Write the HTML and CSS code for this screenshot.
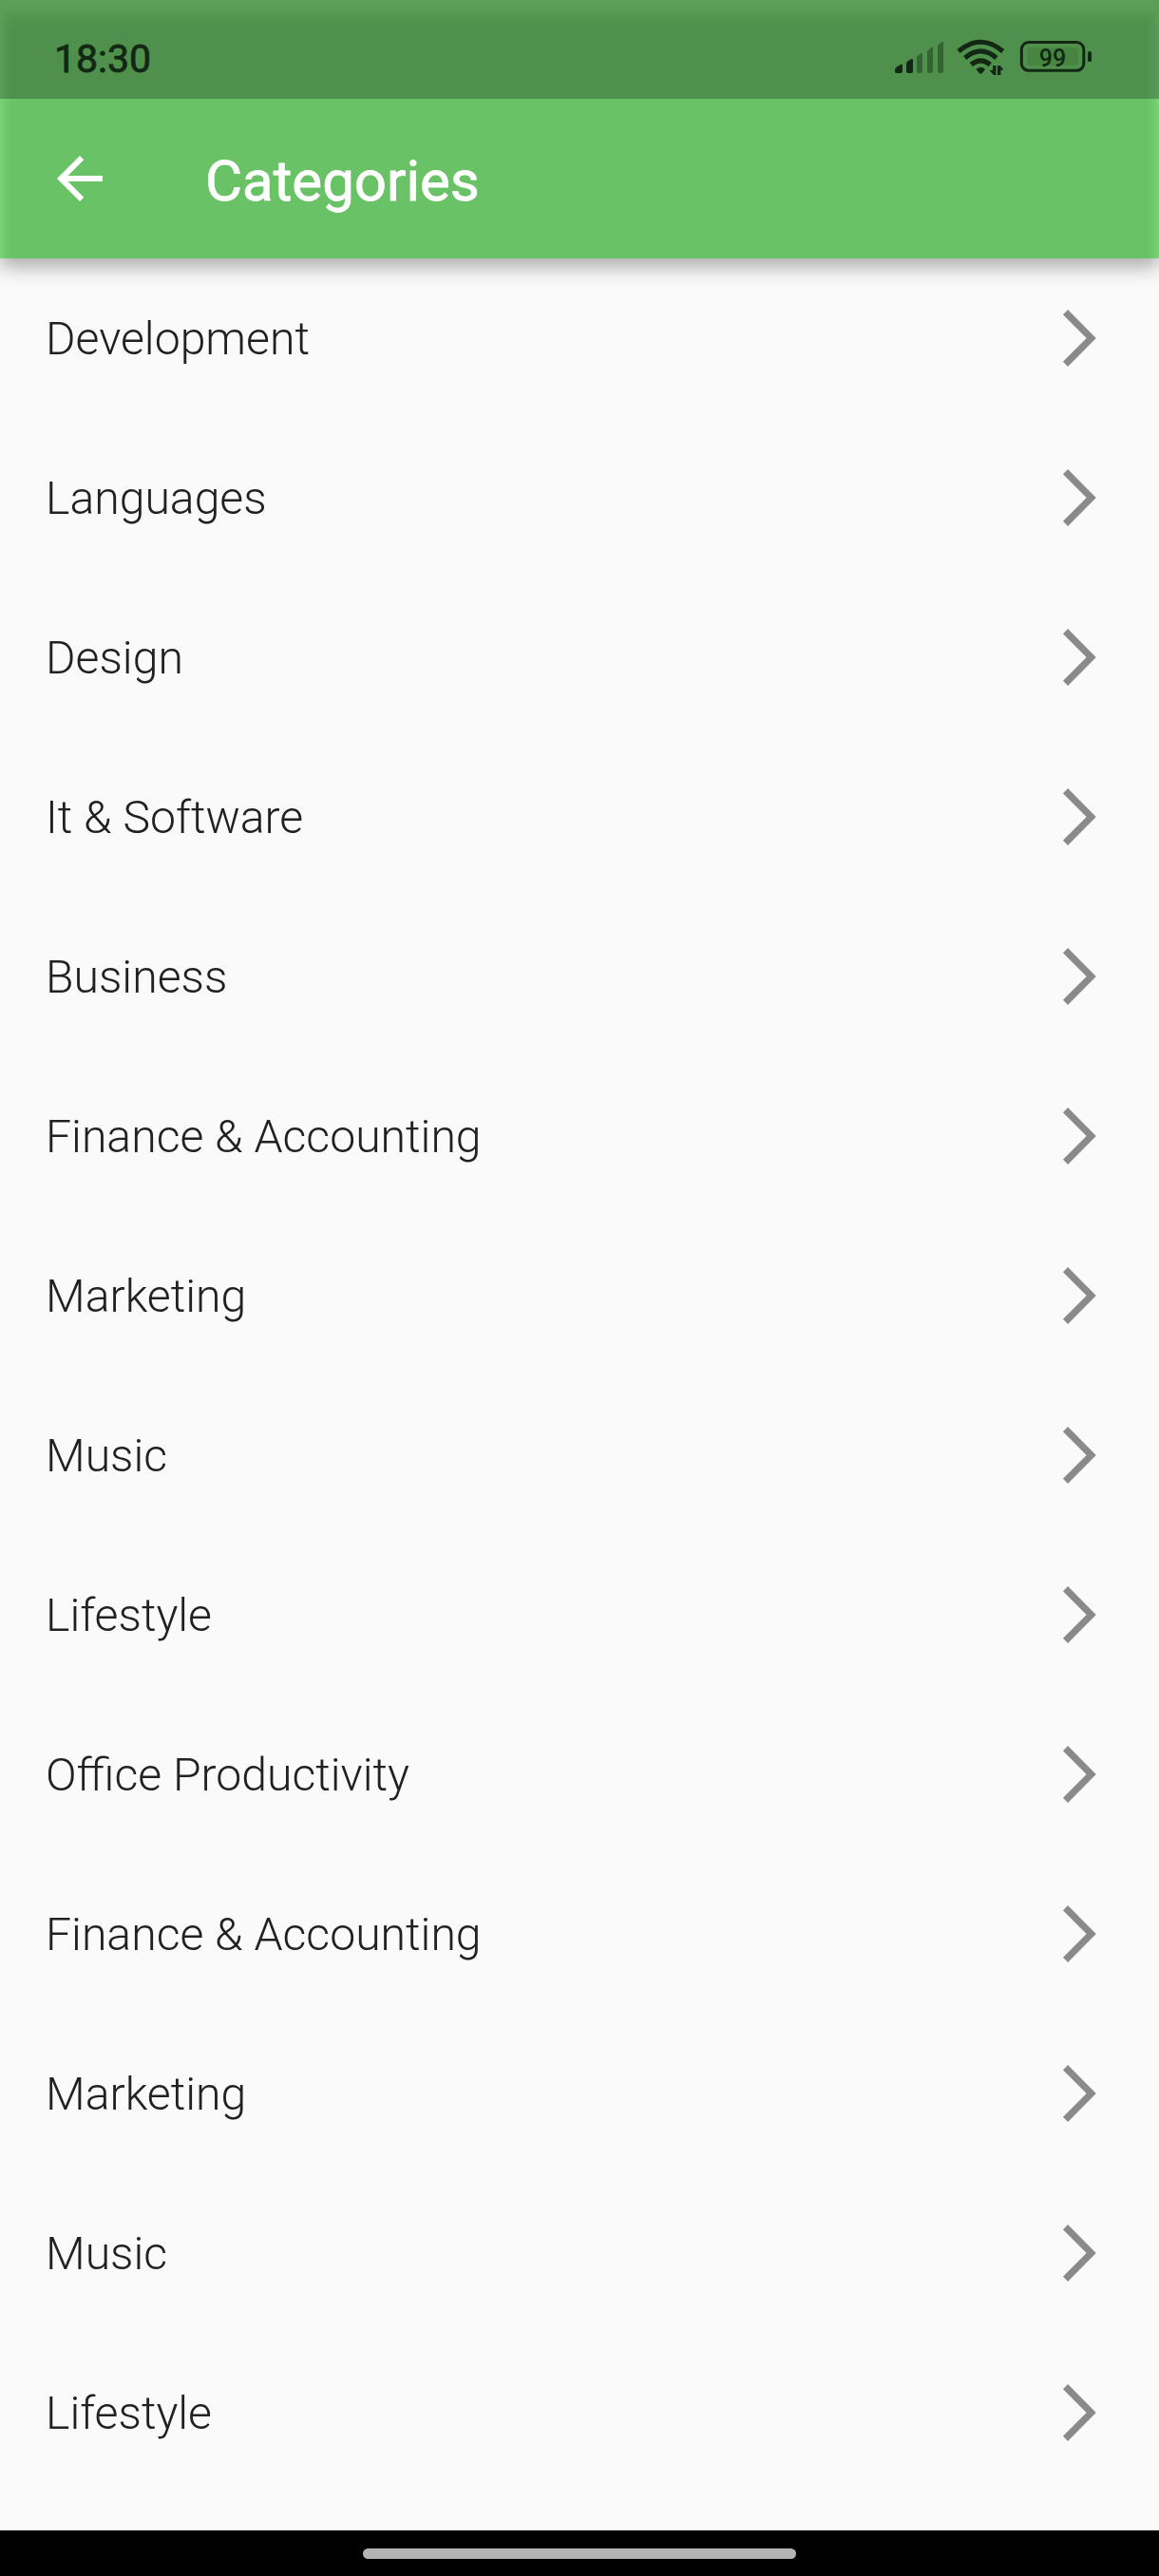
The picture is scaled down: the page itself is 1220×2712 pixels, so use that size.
FILE: index.html
```html
<!DOCTYPE html>
<html lang="en">
<head>
<meta charset="utf-8">
<title>Categories</title>
<link rel="stylesheet" href="styles.css">
</head>
<body>
<svg class="defs" aria-hidden="true">
  <symbol id="chevron" viewBox="0 0 40 64"><path d="M4.5 4.6 31.7 32 4.5 59.4" fill="none" stroke="#8a8a8a" stroke-width="7.2"/></symbol>
</svg>
<header class="header">
  <div class="status">
    <span class="clock">18:30</span>
    <svg class="status-icons" viewBox="936 32 220 56">
      <g fill="#122814">
        <path d="M942 74q0-2.5 2.6-4l3.8-2.2q1.6-.6 1.6 1V75q0 2-2 2h-4q-2 0-2-2z"/>
        <path d="M954 67q0-1.8 1.8-2.8l3.2-2q2-.8 2 1V75q0 2-2 2h-3q-2 0-2-2z"/>
      </g>
      <g fill="#122814" opacity=".42">
        <path d="M965 61q0-1.8 1.8-2.8l2.4-2.2q1.8-.8 1.8 1V75q0 2-2 2h-2q-2 0-2-2z"/>
        <path d="M976 55q0-1.8 1.8-2.8l2.4-2.2q1.8-.8 1.8 1V75q0 2-2 2h-2q-2 0-2-2z"/>
        <path d="M987 49q0-1.8 1.8-2.8l2.4-2.2q1.8-.8 1.8 1V75q0 2-2 2h-2q-2 0-2-2z"/>
      </g>
      <g fill="none" stroke="#122814" stroke-width="5">
        <path d="M1009 54q23.3-19.5 46.6 0"/>
        <path d="M1015.7 61q16.6-14.2 33.2 0"/>
        <path d="M1022.3 68q10-8.4 20 0"/>
      </g>
      <g fill="#122814">
        <path d="M1027.5 73q4.8-4.6 9.600 0l-3.200 4q-1.600 1.500-3.200 0z"/>
        <path d="M1045 69h3.500v10h-2.700l-4.300-5h3.500zM1050 69h2.800l3.600 4.800h-3v5.200h-3.400z"/>
      </g>
      <rect x="1081" y="50" width="54" height="19" rx="3" fill="#488540"/>
      <rect x="1075.300" y="44.500" width="65.500" height="29.800" rx="7.500" fill="none" stroke="#122814" stroke-width="3"/>
      <rect x="1145" y="54" width="4" height="11" rx="1.500" fill="#122814"/>
      <text class="battery-level" x="1108" y="69.500" text-anchor="middle">99</text>
    </svg>
  </div>
  <div class="toolbar">
    <svg class="back" viewBox="0 0 24 24"><path fill="#fff" d="M20 11H7.830l5.590-5.590L12 4l-8 8 8 8 1.410-1.410L7.830 13H20z"/></svg>
    <h1 class="title">Categories</h1>
  </div>
</header>
<main class="list">
  <div class="row"><span>Development</span><svg class="chevron"><use href="#chevron"/></svg></div>
  <div class="row"><span>Languages</span><svg class="chevron"><use href="#chevron"/></svg></div>
  <div class="row"><span>Design</span><svg class="chevron"><use href="#chevron"/></svg></div>
  <div class="row"><span>It &amp; Software</span><svg class="chevron"><use href="#chevron"/></svg></div>
  <div class="row"><span>Business</span><svg class="chevron"><use href="#chevron"/></svg></div>
  <div class="row"><span>Finance &amp; Accounting</span><svg class="chevron"><use href="#chevron"/></svg></div>
  <div class="row"><span>Marketing</span><svg class="chevron"><use href="#chevron"/></svg></div>
  <div class="row"><span>Music</span><svg class="chevron"><use href="#chevron"/></svg></div>
  <div class="row"><span>Lifestyle</span><svg class="chevron"><use href="#chevron"/></svg></div>
  <div class="row"><span>Office Productivity</span><svg class="chevron"><use href="#chevron"/></svg></div>
  <div class="row"><span>Finance &amp; Accounting</span><svg class="chevron"><use href="#chevron"/></svg></div>
  <div class="row"><span>Marketing</span><svg class="chevron"><use href="#chevron"/></svg></div>
  <div class="row"><span>Music</span><svg class="chevron"><use href="#chevron"/></svg></div>
  <div class="row"><span>Lifestyle</span><svg class="chevron"><use href="#chevron"/></svg></div>
</main>
<footer class="navbar"><div class="handle"></div></footer>
</body>
</html>
```
FILE: styles.css
```css
* { box-sizing: border-box; }
body {
  margin: 0;
  width: 1220px;
  height: 2712px;
  display: flex;
  flex-direction: column;
  background: #fafafa;
  font-family: Roboto, "Liberation Sans", sans-serif;
  overflow: hidden;
}
.defs { display: none; }
.header {
  flex: none;
  height: 272px;
  background:
    linear-gradient(to right, #7bd277, rgba(123, 210, 119, .4) 6px, rgba(123, 210, 119, 0) 13px),
    linear-gradient(to left, #7bd277, rgba(123, 210, 119, .4) 6px, rgba(123, 210, 119, 0) 13px),
    linear-gradient(to bottom, #80d67b, rgba(128, 214, 123, .75) 10px, rgba(128, 214, 123, .25) 18px, rgba(128, 214, 123, 0) 28px),
    #6ac266;
  box-shadow: 0 8px 20px rgba(0, 0, 0, .34);
}
.status {
  height: 104px;
  padding: 0 64px 0 57px;
  display: flex;
  align-items: center;
  justify-content: space-between;
  background: rgba(0, 0, 0, .25);
}
.clock {
  padding-top: 19px;
  font-size: 41px;
  line-height: 48px;
  font-weight: 400;
  -webkit-text-stroke: .8px #122814;
  color: #122814;
}
.status-icons { width: 220px; height: 56px; margin-top: 16px; }
.battery-level { font-size: 25px; font-weight: 500; fill: #122814; }
.toolbar {
  height: 168px;
  padding-left: 48px;
  display: flex;
  align-items: center;
}
.back { width: 72px; height: 72px; }
.title {
  margin: 6px 0 0 96px;
  font-size: 60px;
  line-height: 72px;
  font-weight: 400;
  -webkit-text-stroke: .8px #fff;
  color: #fff;
}
.list { flex: 1; }
.row {
  height: 168px;
  padding: 0 60px 0 48px;
  display: flex;
  align-items: center;
  justify-content: space-between;
  font-size: 48.15px;
  font-weight: 300;
  color: #212121;
}
.chevron { width: 40px; height: 64px; margin-right: 3px; }
.navbar {
  flex: none;
  height: 48px;
  display: flex;
  justify-content: center;
  padding-top: 19px;
  background: #000;
}
.handle { width: 456px; height: 11px; border-radius: 6px; background: #b3b3b3; }
```
